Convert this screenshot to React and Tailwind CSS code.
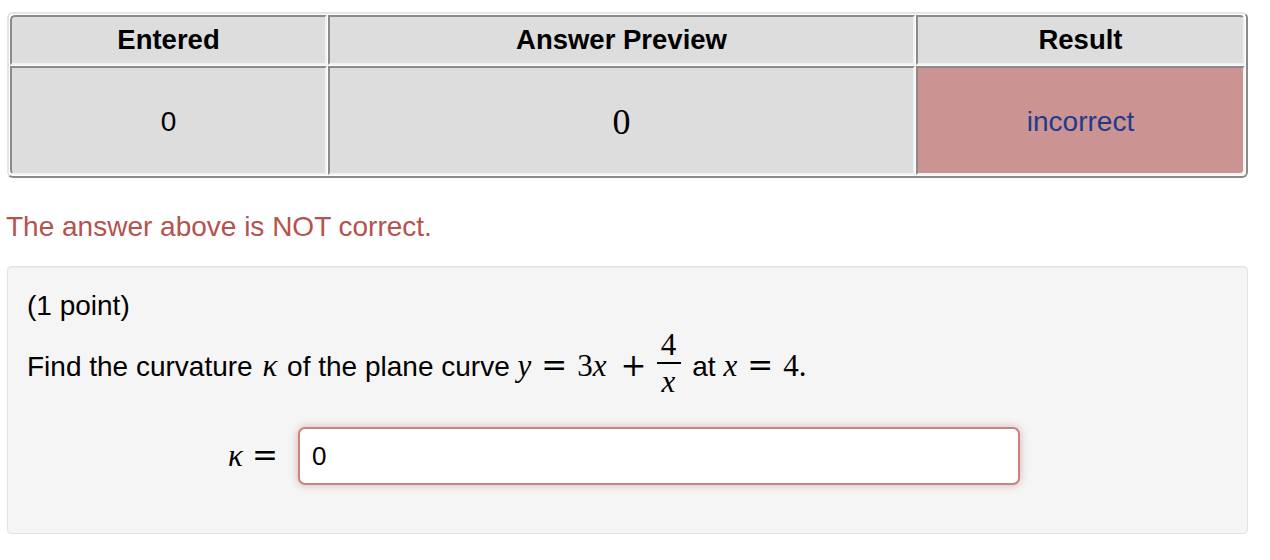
import React from 'react';

const sans = { fontFamily: '"Liberation Sans", Arial, sans-serif' };

function MI({ children }) {
  return <span className="italic font-['Liberation_Serif',serif]">{children}</span>;
}
function MN({ children }) {
  return <span className="font-['Liberation_Serif',serif]">{children}</span>;
}
function MO({ children, className = '' }) {
  return <span className={`font-['DejaVu_Serif',serif] ${className}`}>{children}</span>;
}

export default function App() {
  return (
    <div className="bg-white w-[1270px] h-[560px] overflow-hidden text-black" style={sans}>
      {/* ATTEMPT RESULTS TABLE */}
      <table className="ml-[7px] mt-[12px] w-[1241px] table-fixed border-separate border-spacing-[1px] border-2 border-t-[#e4e4e4] border-l-[#e4e4e4] border-b-[#8a8a8a] border-r-[#8a8a8a] rounded-[6px]">
        <colgroup>
          <col className="w-[317px]" />
          <col className="w-[587px]" />
          <col className="w-[329px]" />
        </colgroup>
        <thead>
          <tr className="h-[50px]">
            <th className="bg-[#dddddd] border-2 border-t-[#8a8a8a] border-l-[#8a8a8a] border-b-[#f2f2f2] border-r-[#f2f2f2] rounded-tl-[5px] text-[27.5px] font-bold p-0">Entered</th>
            <th className="bg-[#dddddd] border-2 border-t-[#8a8a8a] border-l-[#8a8a8a] border-b-[#f2f2f2] border-r-[#f2f2f2] text-[27.5px] font-bold p-0">Answer Preview</th>
            <th className="bg-[#dddddd] border-2 border-t-[#8a8a8a] border-l-[#8a8a8a] border-b-[#f2f2f2] border-r-[#f2f2f2] rounded-tr-[5px] text-[27.5px] font-bold p-0">Result</th>
          </tr>
        </thead>
        <tbody>
          <tr className="h-[109px]">
            <td className="bg-[#dddddd] border-2 border-t-[#8a8a8a] border-l-[#8a8a8a] border-b-[#f2f2f2] border-r-[#f2f2f2] rounded-bl-[5px] text-center text-[28px] p-0 pt-[3px]">0</td>
            <td className="bg-[#dddddd] border-2 border-t-[#8a8a8a] border-l-[#8a8a8a] border-b-[#f2f2f2] border-r-[#f2f2f2] text-center text-[36px] font-['Liberation_Serif',serif] p-0 pt-[3px]">0</td>
            <td className="bg-[#cc9393] border-2 border-t-[#8a8a8a] border-l-[#8a8a8a] border-b-[#f2f2f2] border-r-[#f2f2f2] rounded-br-[5px] text-center text-[28px] text-[#1d3b8c] p-0 pt-[3px]">incorrect</td>
          </tr>
        </tbody>
      </table>

      {/* FEEDBACK */}
      <p className="mt-[29px] ml-[6px] text-[28px] leading-[40px] text-[#b5524e]">The answer above is NOT correct.</p>

      {/* PROBLEM */}
      <div className="mt-[19px] ml-[7px] w-[1241px] h-[268px] bg-[#f5f5f5] border border-[#e3e3e3] rounded-[4px] shadow-[inset_0_1px_1px_rgba(0,0,0,0.05)] px-[19px] pt-[19px]">
        <p className="text-[28px] leading-[40px]">(1 point)</p>
        <p className="mt-[4px] text-[28px] leading-[40px] whitespace-nowrap">
          Find the curvature <span className="text-[31px] mx-[2px]"><MI>κ</MI></span> of the plane curve{' '}
          <span className="text-[31px]">
            <MI>y</MI>
            <MO className="mx-[10px]">=</MO>
            <MN>3</MN><MI>x</MI>
            <MO className="ml-[14px] mr-[6px]">+</MO>
            <span className="inline-flex flex-col items-center align-[21px] mx-[4px]">
              <span className="leading-[29px]"><MN>4</MN></span>
              <span className="w-[24px] h-[2px] bg-black mt-[3px] mb-[3px]" />
              <span className="leading-[29px]"><MI>x</MI></span>
            </span>
          </span>
          {' '}at{' '}
          <span className="text-[31px]">
            <MI>x</MI>
            <MO className="mx-[10px]">=</MO>
            <MN>4.</MN>
          </span>
        </p>

        <div className="mt-[31px] ml-[201px] flex items-center">
          <span className="text-[31px]">
            <MI>κ</MI>
            <MO className="ml-[9px]">=</MO>
          </span>
          <input
            readOnly
            value="0"
            className="ml-[20px] w-[722px] h-[58px] bg-white border-2 border-[#c98282] rounded-[7px] shadow-[0_0_8px_rgba(190,90,90,0.45)] px-[12px] text-[26px] outline-none"
            style={sans}
          />
        </div>
      </div>
    </div>
  );
}
